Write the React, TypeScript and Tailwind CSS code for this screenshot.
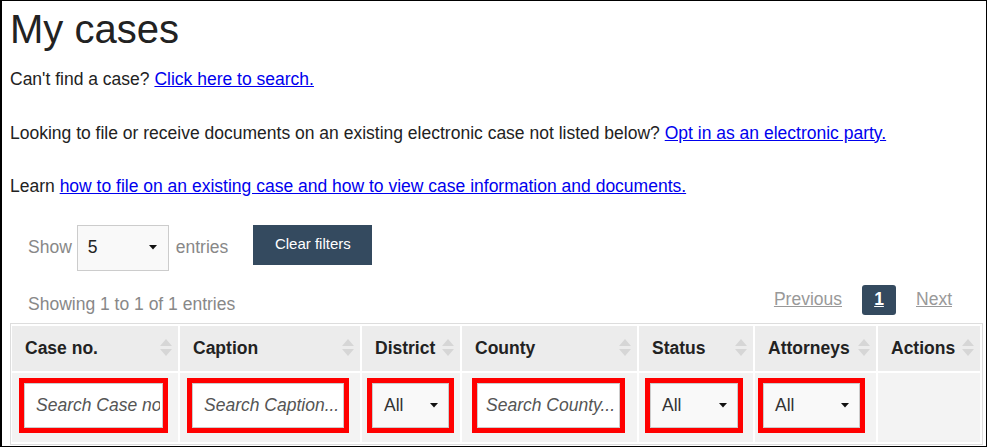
import React from 'react';

const columns = ['Case no.', 'Caption', 'District', 'County', 'Status', 'Attorneys', 'Actions'];

function SortIcon() {
  return (
    <svg width="14" height="20" viewBox="0 0 14 20" className="shrink-0">
      <path d="M7 1 L13 8 L1 8 Z" fill="#d6d6d6" />
      <path d="M1 11 L13 11 L7 18 Z" fill="#d6d6d6" />
    </svg>
  );
}

function Caret() {
  return (
    <svg width="8" height="5" viewBox="0 0 8 5">
      <path d="M0 0 L8 0 L4 4.5 Z" fill="#111" />
    </svg>
  );
}

function SearchBox({ placeholder, className, pad }: { placeholder: string; className: string; pad: string }) {
  return (
    <div className={`border-[5px] border-[#ff0000] ${className}`}>
      <input
        placeholder={placeholder}
        className={`block h-[45px] w-full border border-[#ccc] bg-white pr-[2px] text-[17.5px] outline-none placeholder:italic placeholder:text-[#555] ${pad}`}
      />
    </div>
  );
}

function SelectBox({ className }: { className: string }) {
  return (
    <div className={`border-[5px] border-[#ff0000] ${className}`}>
      <div className="flex h-[45px] items-center justify-between border border-[#ccc] bg-[#f9f9f9] pl-[11px] pr-[10px] text-[17.5px] text-[#333]">
        <span>All</span>
        <Caret />
      </div>
    </div>
  );
}

export default function App() {
  return (
    <div className="h-[448px] w-[988px] overflow-hidden bg-white font-['Liberation_Sans',Arial,sans-serif] text-[#222]">
      <div className="h-[447px] w-[987px] overflow-hidden border border-l-2 border-black">
        <div className="px-[8px] text-[17.5px] leading-[22px]">
          <h1 className="mt-[6px] text-[40px] leading-[44px]">My cases</h1>
          <p className="mt-[17px]">
            Can't find a case?{' '}
            <a href="#" className="text-[#0000ee] underline">Click here to search.</a>
          </p>
          <p className="mt-[31.5px]">
            Looking to file or receive documents on an existing electronic case not listed below?{' '}
            <a href="#" className="text-[#0000ee] underline">Opt in as an electronic party.</a>
          </p>
          <p className="mt-[31.5px]">
            Learn{' '}
            <a href="#" className="text-[#0000ee] underline">
              how to file on an existing case and how to view case information and documents.
            </a>
          </p>
        </div>

        <div className="mt-[27.5px] flex items-start pl-[26px] text-[17.5px]">
          <div className="flex h-[46px] items-center text-[#888]">
            <span>Show</span>
            <div className="ml-[5px] flex h-[46px] w-[92px] items-center justify-between border border-[#ccc] bg-[#f9f9f9] pl-[10px] pr-[11px] text-[#222]">
              <span>5</span>
              <Caret />
            </div>
            <span className="ml-[7px]">entries</span>
          </div>
          <button className="ml-[25px] h-[40px] w-[119px] bg-[#344a5f] text-[15px] text-white">
            Clear filters
          </button>
        </div>

        <div className="mt-[14px] flex items-end justify-between pl-[26px] pr-[34px] text-[17.5px]">
          <span className="leading-[22px] text-[#888]">Showing 1 to 1 of 1 entries</span>
          <div className="flex items-center">
            <a href="#" className="text-[#999] underline">Previous</a>
            <span className="ml-[20px] flex h-[30px] w-[34px] items-center justify-center rounded-[3px] bg-[#344a5f] font-bold text-white underline">
              1
            </span>
            <a href="#" className="ml-[20px] text-[#999] underline">Next</a>
          </div>
        </div>

        <div className="ml-[8px] mt-[8px] w-[973px] border border-[#ddd] pb-[2px] pl-[1px] pr-[2px] pt-[2px]">
          <div className="grid grid-cols-[166px_180px_98px_175px_114px_121px_1fr] gap-x-[2px] gap-y-[2px]">
            {columns.map((c) => (
              <div
                key={c}
                className="flex h-[45px] items-center justify-between gap-[4px] bg-[#ececec] pl-[13px] pr-[5px] text-[17.5px] font-bold text-[#222]"
              >
                <span className="whitespace-nowrap">{c}</span>
                <SortIcon />
              </div>
            ))}
            <div className="bg-[#f3f3f3] pb-[9px] pl-[7px] pt-[5px]">
              <SearchBox placeholder="Search Case no..." className="w-[149px]" pad="pl-[11px]" />
            </div>
            <div className="bg-[#f3f3f3] pb-[9px] pl-[7px] pt-[5px]">
              <SearchBox placeholder="Search Caption..." className="w-[162px]" pad="pl-[11px]" />
            </div>
            <div className="bg-[#f3f3f3] pb-[9px] pl-[5px] pt-[5px]">
              <SelectBox className="w-[87px]" />
            </div>
            <div className="bg-[#f3f3f3] pb-[9px] pl-[10px] pt-[5px]">
              <SearchBox placeholder="Search County..." className="w-[153px]" pad="pl-[8px]" />
            </div>
            <div className="bg-[#f3f3f3] pb-[9px] pl-[6px] pt-[5px]">
              <SelectBox className="w-[98px]" />
            </div>
            <div className="bg-[#f3f3f3] pb-[9px] pl-[3px] pt-[5px]">
              <SelectBox className="w-[107px]" />
            </div>
            <div className="bg-[#f3f3f3]" />
          </div>
        </div>
      </div>
    </div>
  );
}
